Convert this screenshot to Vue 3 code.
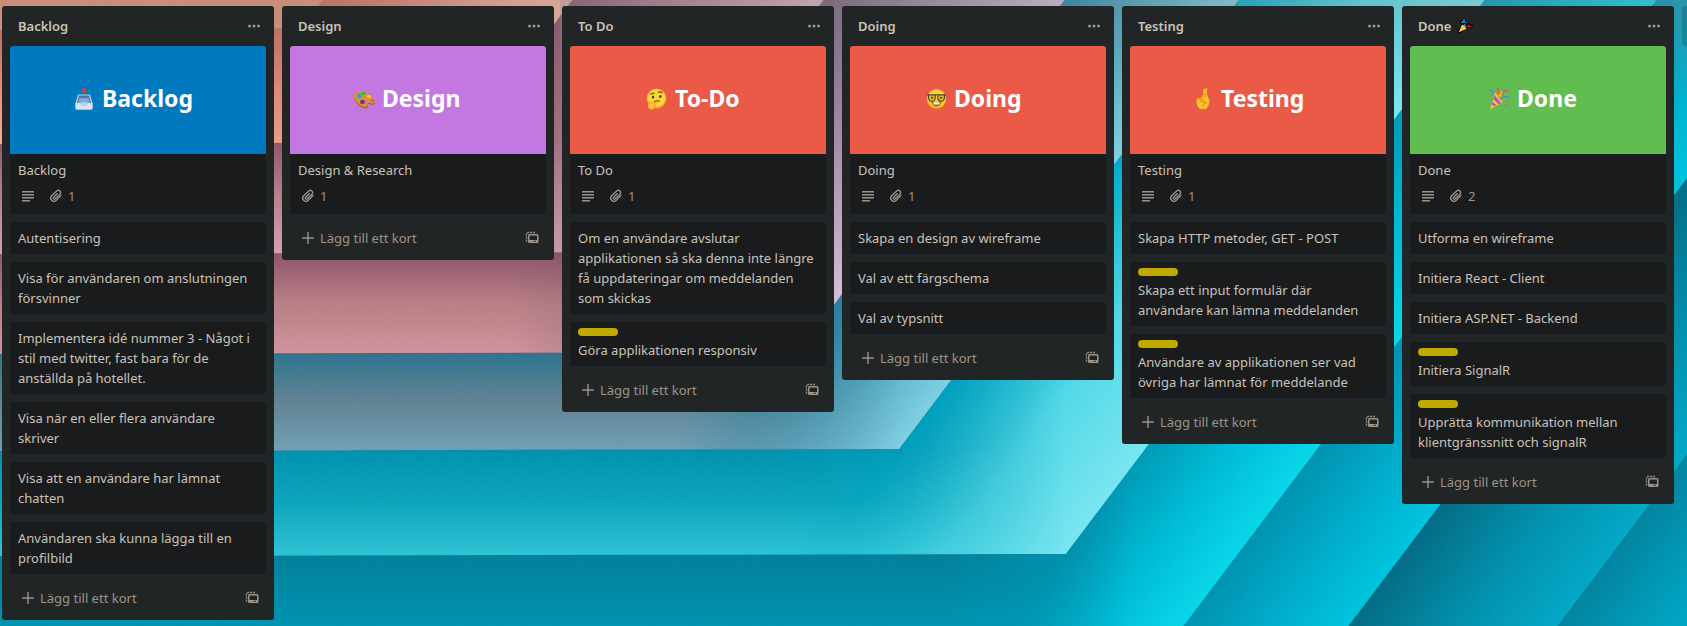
<script setup>
const lists = [
  {
    title: 'Backlog',
    cards: [
      { text: 'Backlog', cover: { label: 'Backlog', color: '#0079bf', art: 'tray', iconX: 63, labelX: 92 }, description: true, attachments: 1 },
      { text: 'Autentisering' },
      { text: 'Visa för användaren om anslutningen försvinner' },
      { text: 'Implementera idé nummer 3 - Något i stil med twitter, fast bara för de anställda på hotellet.' },
      { text: 'Visa när en eller flera användare skriver' },
      { text: 'Visa att en användare har lämnat chatten' },
      { text: 'Användaren ska kunna lägga till en profilbild' },
    ],
  },
  {
    title: 'Design',
    cards: [
      { text: 'Design & Research', cover: { label: 'Design', color: '#c377e0', art: 'palette', iconX: 63, labelX: 92 }, attachments: 1 },
    ],
  },
  {
    title: 'To Do',
    cards: [
      { text: 'To Do', cover: { label: 'To-Do', color: '#eb5a46', art: 'thinking', iconX: 76, labelX: 105 }, description: true, attachments: 1 },
      { text: 'Om en användare avslutar applikationen så ska denna inte längre få uppdateringar om meddelanden som skickas' },
      { text: 'Göra applikationen responsiv', tag: true },
    ],
  },
  {
    title: 'Doing',
    cards: [
      { text: 'Doing', cover: { label: 'Doing', color: '#eb5a46', art: 'nerd', iconX: 76, labelX: 104 }, description: true, attachments: 1 },
      { text: 'Skapa en design av wireframe' },
      { text: 'Val av ett färgschema' },
      { text: 'Val av typsnitt' },
    ],
  },
  {
    title: 'Testing',
    cards: [
      { text: 'Testing', cover: { label: 'Testing', color: '#eb5a46', art: 'fingers', iconX: 62, labelX: 91 }, description: true, attachments: 1 },
      { text: 'Skapa HTTP metoder, GET - POST' },
      { text: 'Skapa ett input formulär där användare kan lämna meddelanden', tag: true },
      { text: 'Användare av applikationen ser vad övriga har lämnat för meddelande', tag: true },
    ],
  },
  {
    title: 'Done',
    popper: true,
    cards: [
      { text: 'Done', cover: { label: 'Done', color: '#61bd4f', art: 'popper', iconX: 78, labelX: 107 }, description: true, attachments: 2 },
      { text: 'Utforma en wireframe' },
      { text: 'Initiera React - Client' },
      { text: 'Initiera ASP.NET - Backend' },
      { text: 'Initiera SignalR', tag: true },
      { text: 'Upprätta kommunikation mellan klientgränssnitt och signalR', tag: true },
    ],
  },
]

// Folded paper sheets, outermost first: where the fold meets the top edge,
// the height of its lower edge, and the colours across each arm.
const SLOPE = 0.755
const folds = [
  { top: 322, y: 28, flat: ['#c48672', '#c98f7a'], slant: ['#c68a76', '#c68a76'] },
  { top: 572, y: 142, flat: ['#b4685e', '#e98672', '#fba78f'], slant: ['#bd7768', '#d5a596'] },
  { top: 823, y: 252, flat: ['#8a5362', '#b47d88', '#d19ca8'], slant: ['#85586c', '#d9aeb8'] },
  { top: 1064, y: 352, flat: ['#884f66', '#b67a80', '#cc8f98'], slant: ['#705970', '#d3b9d6'] },
  { top: 1238, y: 449, flat: ['#286f8c', '#5b7f8f', '#6d9bb0'], slant: ['#2080a0', '#7ccde0'] },
  { top: 1484, y: 554, flat: ['#018dab', '#0ba1b9', '#29c0d3'], slant: ['#00a8c6', '#4ed7e6', '#75e4ef'] },
  { top: 1656, y: 700, flat: ['#037b96', '#0090ae', '#00b0cc'], slant: ['#0096b4', '#00b9d4', '#08d5e8'] },
  { top: 1821, y: 820, slant: ['#008fae', '#00a9c8', '#00c2de'] },
  { top: 2030, y: 980, slant: ['#04677f', '#028ba9', '#02a6c5'] },
  { top: 2240, y: 1140, slant: ['#037f9c', '#009fbe', '#00b2cf'] },
]
const sheets = folds
  .map((fold, i) => {
    const prevTop = i ? folds[i - 1].top : 60
    const prevY = i ? folds[i - 1].y : -20
    const width = fold.top - prevTop
    const corner = fold.top - fold.y * SLOPE
    const prevCorner = prevTop - prevY * SLOPE
    return {
      ...fold,
      id: i,
      prevY,
      fadeStart: prevCorner - 120,
      fadeEnd: corner,
      points: `-10,-10 ${fold.top + 8},-10 ${corner},${fold.y} -10,${fold.y + 2}`,
      x1: prevTop,
      x2: prevTop + width * 0.637,
      y2: width * 0.481,
    }
  })
  .reverse()
</script>

<template>
  <main class="board">
    <svg class="backdrop" viewBox="0 0 1687 626" preserveAspectRatio="xMinYMin slice" aria-hidden="true">
      <defs>
        <template v-for="s in sheets" :key="s.id">
          <linearGradient :id="`slant${s.id}`" gradientUnits="userSpaceOnUse" :x1="s.x1" y1="0" :x2="s.x2" :y2="s.y2">
            <stop v-for="(c, n) in s.slant" :key="n" :offset="n / (s.slant.length - 1)" :stop-color="c" />
          </linearGradient>
          <template v-if="s.flat">
            <linearGradient :id="`flat${s.id}`" gradientUnits="userSpaceOnUse" x1="0" :y1="s.prevY" x2="0" :y2="s.y">
              <stop v-for="(c, n) in s.flat" :key="n" :offset="n / (s.flat.length - 1)" :stop-color="c" />
            </linearGradient>
            <linearGradient :id="`fade${s.id}`" gradientUnits="userSpaceOnUse" :x1="s.fadeStart" y1="0" :x2="s.fadeEnd" y2="0">
              <stop offset="0" stop-color="#fff" />
              <stop offset="1" stop-color="#000" />
            </linearGradient>
            <mask :id="`mask${s.id}`" maskUnits="userSpaceOnUse" x="-10" y="-10" width="1700" height="720">
              <rect x="-10" y="-10" width="1700" height="720" :fill="`url(#fade${s.id})`" />
            </mask>
          </template>
        </template>
        <linearGradient id="haze" x1="0" y1="0" x2="0" y2="1">
          <stop offset="0" stop-color="#7c8488" stop-opacity=".3" />
          <stop offset="1" stop-color="#7c8488" stop-opacity="0" />
        </linearGradient>
        <filter id="paper" x="0" y="0" width="100%" height="100%">
          <feTurbulence type="fractalNoise" baseFrequency=".5" numOctaves="2" seed="4" />
          <feColorMatrix type="saturate" values="0" />
          <feComponentTransfer><feFuncA type="linear" slope="0" intercept="1" /></feComponentTransfer>
        </filter>
      </defs>
      <g v-for="s in sheets" :key="s.id">
        <polygon :points="s.points" :fill="`url(#slant${s.id})`" />
        <polygon v-if="s.flat" :points="s.points" :fill="`url(#flat${s.id})`" :mask="`url(#mask${s.id})`" />
      </g>
      <rect x="560" width="1127" height="100" fill="url(#haze)" />
      <rect class="grain" width="1687" height="626" filter="url(#paper)" />
    </svg>

    <section v-for="list in lists" :key="list.title" class="list">
      <header class="list-head">
        <h2>
          {{ list.title }}
          <svg v-if="list.popper" class="popper" viewBox="0 0 16 16" aria-hidden="true">
            <path d="M.8 15.2 5 5.200 10.500 11z" fill="#ffc83d" stroke="#000" stroke-width="1" stroke-linejoin="round" />
            <path d="M3 5V2.500h2l2-2 2 1v2h1.500v2H8L5.500 7z" fill="#000" />
            <path d="M4 3.500h2.500v1.500H4zM6 1.500h2v3H6zM8 4h2v1H8z" fill="#0a9bd8" />
            <path d="M9 7.500l2.500-2.500 2 1h2v3l-2.500 2-1-1.500-2 .5z" fill="#000" />
            <path d="M10 7.500h1.500v-1h1v1.500h2V9h-2v1l-1-1H10z" fill="#e01b1b" />
            <path d="M6 7l2-.5L9 9l-1 1z" fill="#58b8a0" />
            <path d="M7 6.500h1V8H7z" fill="#ff2fd0" />
          </svg>
        </h2>
        <button class="icon-button menu" type="button" aria-label="Listmeny">
          <svg viewBox="0 0 16 16" aria-hidden="true">
            <circle cx="3.500" cy="8" r="1.500" /><circle cx="8" cy="8" r="1.500" /><circle cx="12.500" cy="8" r="1.500" />
          </svg>
        </button>
      </header>

      <a v-for="card in list.cards" :key="card.text" class="card" href="#">
        <svg v-if="card.cover" class="cover" viewBox="0 0 256 108" :style="{ background: card.cover.color }">
          <svg :x="card.cover.iconX" y="42" width="22" height="22" viewBox="0 0 22 22">
            <g v-if="card.cover.art === 'tray'">
              <path d="M5 6.500h12l2.500 8.500v5q0 1.500-1.500 1.500H4Q2.500 21.500 2.500 20v-5z" fill="#b9cde2" />
              <path d="M6 7.500h10l2 7.500H4z" fill="#4a74a8" />
              <path d="M6.500 10h9l1.500 5H5z" fill="#7da9d8" />
              <path d="M2.500 15H7l1.500 3h5l1.500-3h4.500v5q0 1.500-1.500 1.500H4Q2.500 21.500 2.500 20z" fill="#dce3ec" />
              <path d="M8 14h6l-1 3.500H9z" fill="#a9d0f7" />
              <path d="M11 5.500l3.300-2.700h-2V0H9.700v2.800h-2z" fill="#e8392c" />
            </g>
            <g v-else-if="card.cover.art === 'palette'">
              <path d="M1 9C0 4 6 1 13 5c5 2.500 9.500 7 8.500 10.500-1 2.500-3.500 1-5 .5-2 0-1 2-2 3.500-2 2.500-8-.5-10.500-4C2 13 1.200 11 1 9z" fill="#a8651f" />
              <path d="M1 8C1 3.500 6 1.500 13 4.500c5 2.500 9 6.500 8.300 9.700-1 2.300-3.500 1-5 .5-2 0-1.300 2-2.300 3.300-2 2.500-7.500-.5-10-4C2 12 1.200 10 1 8z" fill="#dc9238" />
              <ellipse cx="6" cy="8" rx="2.300" ry="2.600" fill="#20a8dc" />
              <ellipse cx="10.500" cy="5.500" rx="2.700" ry="1.800" fill="#45b52c" />
              <ellipse cx="16" cy="8.500" rx="2" ry="1.500" fill="#f4cf20" />
              <ellipse cx="19" cy="12.500" rx="2" ry="1.500" fill="#ec6047" />
              <ellipse cx="9.500" cy="14" rx="2.500" ry="2.200" fill="#71349f" />
              <ellipse cx="14.500" cy="13.500" rx="1.200" ry="1.500" fill="#c377e0" />
            </g>
            <g v-else-if="card.cover.art === 'thinking'">
              <circle cx="10.500" cy="10.500" r="9.800" fill="#f4ae20" />
              <circle cx="10.500" cy="9.800" r="9" fill="#fdd63c" />
              <path d="M4.500 6.500q2-1.800 4-1M12 4.500q2.500-1.500 4.500.5" fill="none" stroke="#6d451b" stroke-width="1.100" />
              <ellipse cx="7" cy="9" rx="1.200" ry="1.600" fill="#50341b" />
              <ellipse cx="14.300" cy="8.500" rx="1.200" ry="1.600" fill="#50341b" />
              <path d="M8 13.500q3-1.500 6 0" fill="none" stroke="#6d451b" stroke-width="1.100" />
              <path d="M3.500 14q1.500-1.500 2 1l5-1.300q1.500.3 0 1.800l-1.500.5q1 4-2 5.300-4 1-5-2.300-.5-2.500 1.500-5z" fill="#ffc23a" stroke="#df8c18" stroke-width=".6" />
            </g>
            <g v-else-if="card.cover.art === 'nerd'">
              <circle cx="10.500" cy="11" r="9.800" fill="#f2a91d" />
              <circle cx="10.500" cy="10.300" r="9" fill="#fdd03a" />
              <path d="M1 6.800h19M2.500 7h6.700v3.500q-.7 3-3.300 3t-3.200-3zM11.800 7h6.700l-.2 3.500q-.7 3-3.200 3t-3.300-3z" fill="#e1b92c" stroke="#4a4030" stroke-width="1.100" />
              <circle cx="6.200" cy="9.800" r="1" fill="#3c2b18" /><circle cx="15" cy="9.800" r="1" fill="#3c2b18" />
              <path d="M5.500 14.500h10q-1 4-5 4t-5-4z" fill="#a6601a" />
              <path d="M7.500 14.500h6v2h-6z" fill="#fff" />
            </g>
            <g v-else-if="card.cover.art === 'fingers'">
              <path d="M9 10 13.500 0q2-.5 2 1.500L13.500 9z" fill="#f3a81c" />
              <path d="M11 1.500q1.500-1 2.500.5l3 8.500q1.500 1.500 1 4-.7 4-3.500 6.500H8Q4.500 18 4.300 13q0-3.500 3-3l3.500-.5 1.700-1z" fill="#fdbf2d" />
              <path d="M4.500 11.500q2-2.500 4.500 0v3M8 11.500q2-1.500 3.500.5v2.500M10.500 14.500q3-2 4 .3-3.500 1-4 4" fill="none" stroke="#d98612" stroke-width=".9" />
              <path d="M14 9l-1.500-4" stroke="#d98612" stroke-width=".8" />
            </g>
            <g v-else>
              <path d="M2 21.500 7.500 4q5 3 7.500 10z" fill="#fcc433" />
              <path d="M6.500 7.500 13 15l-2.500 1.200-5-5.200zM4.500 14l4 3.200-2 1-3-1.700z" fill="#a757c9" />
              <path d="M7.500 4q5.500 2 7.500 10-5-2.500-7.500-10z" fill="#ee9023" />
              <path d="M1 2.500q3-1 4 2.500M12 11q4-3.500 9-1.500" fill="none" stroke="#3f91dc" stroke-width="1.600" />
              <path d="M9 0q3 3 .5 6M15 7q-.5-4 4.500-5.500" fill="none" stroke="#e3584b" stroke-width="1.700" />
              <path d="M11 8q3-1 2.500-5" fill="none" stroke="#f8bd2b" stroke-width="1.500" />
              <path d="M3 6h1.500v1.500H3zM17 13h1.500v1.500H17zM20 4h1.500v1.500H20zM19 18h1.500v1.500H19z" fill="#b06bc8" />
              <path d="M13.500.5H15V2h-1.500zM16.500 16H18v1.500h-1.500zM20 14.500h1V16h-1z" fill="#e3635b" />
            </g>
          </svg>
          <text class="cover-text" :x="card.cover.labelX" y="61">{{ card.cover.label }}</text>
        </svg>
        <div class="card-body">
          <span v-if="card.tag" class="tag"></span>
          <p>{{ card.text }}</p>
          <div v-if="card.cover" class="badges">
            <span v-if="card.description" class="badge">
              <svg viewBox="0 0 20 20" aria-hidden="true"><path d="M4 5h12v1.500H4zM4 8h12v1.500H4zM4 11h12v1.500H4zM4 14h8v1.500H4z" /></svg>
            </span>
            <span class="badge">
              <svg viewBox="0 0 20 20" aria-hidden="true">
                <path class="stroke" d="M15.300 9.300l-5 5a3.200 3.200 0 0 1-4.600-4.600l5-4.700a2.200 2.200 0 0 1 3.200 3.200l-4.700 4.600a1.100 1.100 0 0 1-1.600-1.600l4-4" />
              </svg>
              <span>{{ card.attachments }}</span>
            </span>
          </div>
        </div>
      </a>

      <footer class="list-foot">
        <button class="add" type="button">
          <svg viewBox="0 0 20 20" aria-hidden="true"><path d="M9.300 4h1.400v5.300H16v1.400h-5.300V16H9.300v-5.300H4V9.300h5.300z" /></svg>
          <span>Lägg till ett kort</span>
        </button>
        <button class="icon-button" type="button" aria-label="Skapa från mall">
          <svg viewBox="0 0 16 16" aria-hidden="true">
            <path class="stroke" d="M2.500 11.500v-8a1 1 0 0 1 1-1h8.500" stroke-dasharray="2 1" />
            <path d="M5.500 4H13q1.500 0 1.500 1.500v6q0 1.500-1.500 1.500H5.500Q4 13 4 11.500v-6Q4 4 5.500 4zm0 1.500v4.500h7.500V5.500z" fill-rule="evenodd" />
            <path class="slot" d="M9.500 10.800h2.500v.9H9.500z" />
          </svg>
        </button>
      </footer>
    </section>

    <button class="new-list" type="button" aria-label="Lägg till en lista"></button>
  </main>
</template>

<style>
body {
  margin: 0;
}
</style>

<style scoped>
.board {
  position: relative;
  display: flex;
  align-items: flex-start;
  gap: 8px;
  box-sizing: border-box;
  min-height: 100vh;
  padding: 6px 2px;
  overflow: hidden;
  background: #00a5c4;
  color: #c8c3ba;
  font-family: "Noto Sans", "Open Sans", sans-serif;
  font-size: 13px;
  line-height: 20px;
}

.backdrop {
  position: absolute;
  inset: 0;
  width: 100%;
  height: 100%;
}

.grain {
  opacity: 0.18;
  mix-blend-mode: soft-light;
}

.list {
  position: relative;
  display: flex;
  flex: 0 0 272px;
  flex-direction: column;
  gap: 8px;
  box-sizing: border-box;
  padding: 0 8px 6px;
  border-radius: 3px;
  background: #222526;
}

.list-head {
  display: flex;
  align-items: center;
  justify-content: space-between;
  height: 32px;
  padding: 4px 0 0 8px;
  margin-bottom: -4px;
}

h2 {
  display: flex;
  align-items: center;
  gap: 6px;
  margin: 0;
  font-size: 13px;
  font-weight: 600;
}

.popper {
  width: 16px;
  height: 16px;
}

button {
  padding: 0;
  border: 0;
  background: none;
  color: #9d9388;
  font: inherit;
  cursor: pointer;
}

svg {
  display: block;
  fill: currentColor;
}

.stroke {
  fill: none;
  stroke: currentColor;
  stroke-width: 1.3;
}

.slot {
  fill: #222526;
}

.icon-button {
  width: 28px;
  height: 28px;
  padding: 6px;
}

.icon-button.menu {
  width: 24px;
  padding: 6px 4px;
}

.icon-button svg {
  width: 16px;
  height: 16px;
}

.card {
  display: block;
  overflow: hidden;
  border-radius: 3px;
  background: #1a1b1d;
  color: inherit;
  text-decoration: none;
  box-shadow: 0 1px 0 #1d242b;
}

.cover {
  width: 100%;
}

.cover-text {
  fill: #fff;
  font-size: 23px;
  font-weight: 700;
}

.card-body {
  padding: 6px 8px;
}

.tag {
  display: block;
  width: 40px;
  height: 8px;
  margin-bottom: 4px;
  border-radius: 4px;
  background: #c1aa00;
}

p {
  margin: 0;
}

.badges {
  display: flex;
  gap: 8px;
  padding: 6px 0 2px;
  color: #9d9388;
}

.badge {
  display: flex;
  gap: 2px;
}

.badge svg,
.add svg {
  width: 20px;
  height: 20px;
}

.list-foot {
  display: flex;
  align-items: center;
  justify-content: space-between;
  height: 32px;
}

.add {
  display: flex;
  align-items: center;
  gap: 2px;
  padding: 4px 8px;
}

.new-list {
  position: relative;
  flex: 0 0 272px;
  height: 40px;
  border-radius: 3px;
  background: rgba(0, 0, 0, 0.16);
}
</style>
